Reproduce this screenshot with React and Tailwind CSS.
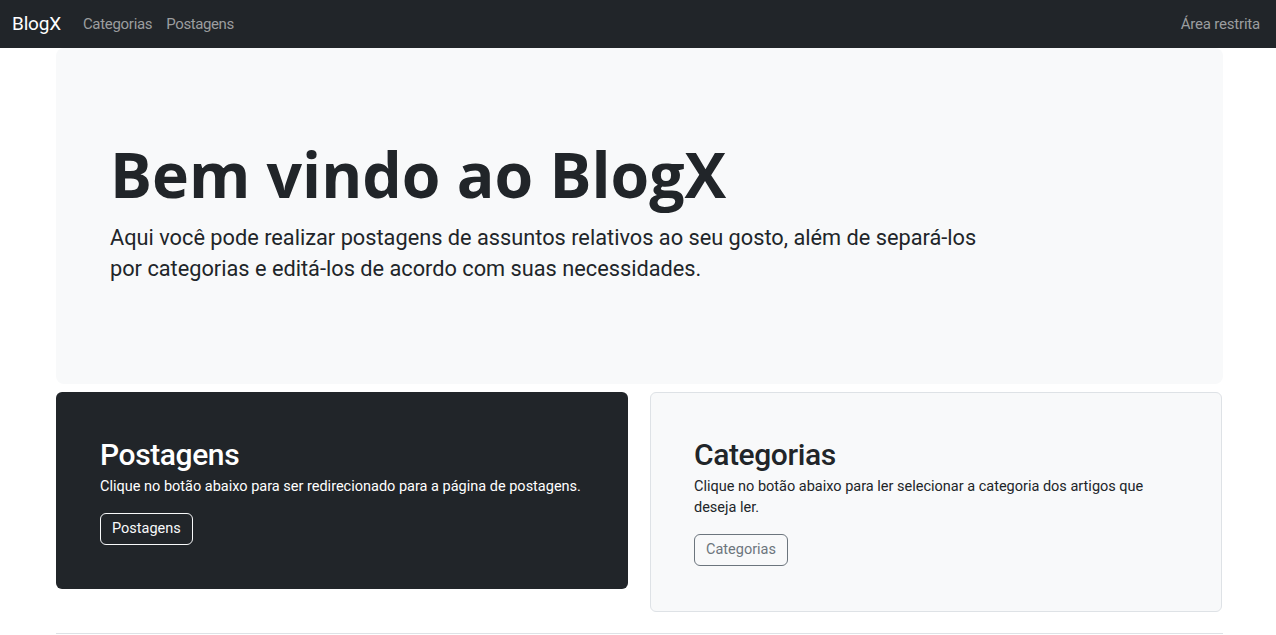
import React from "react";

export default function App() {
  return (
    <div className="bg-white text-[#212529]" style={{ fontFamily: "Roboto, 'Noto Sans', sans-serif" }}>
      <nav className="h-12 bg-[#212529] flex items-center pl-3 pr-4">
        <a className="text-white text-[19px] leading-[30px] tracking-[-0.2px] mr-[14px]">BlogX</a>
        <a className="text-[#9b9d9f] text-[15px] tracking-[-0.3px] px-2">Categorias</a>
        <a className="text-[#9b9d9f] text-[15px] tracking-[-0.4px] px-[6px]">Postagens</a>
        <a className="ml-auto text-[#9b9d9f] text-[15px] tracking-[-0.2px]">Área restrita</a>
      </nav>

      <main className="ml-[56px] w-[1167px]">
        <section className="h-[336px] bg-[#f8f9fa] rounded-lg pt-[89px] pl-[54px]">
          <h1
            className="text-[62.5px] leading-[74px] font-bold mb-[11px]"
            style={{ fontFamily: "'Open Sans', Roboto, sans-serif" }}
          >
            Bem vindo ao BlogX
          </h1>
          <p className="text-[21.75px] leading-[31px] w-[885px]">
            Aqui você pode realizar postagens de assuntos relativos ao seu gosto, além de separá-los por categorias e editá-los de acordo com suas necessidades.
          </p>
        </section>

        <div className="grid grid-cols-[572px_572px] items-start gap-[22px] mt-2">
          <div className="bg-[#212529] text-white rounded-md p-11">
            <h2 className="text-[30px] leading-[37px] font-medium tracking-[-0.4px] mb-[3px]">Postagens</h2>
            <p className="text-[14.5px] leading-[21px] mb-4 whitespace-nowrap">Clique no botão abaixo para ser redirecionado para a página de postagens.</p>
            <button className="h-8 px-[11px] border border-[#f8f9fa] rounded-md text-[14.5px] text-[#f8f9fa]">Postagens</button>
          </div>
          <div className="bg-[#f8f9fa] border border-[#dee2e6] rounded-md px-[43px] pt-[43px] pb-[45px]">
            <h2 className="text-[30px] leading-[37px] font-medium tracking-[-0.4px] mb-[3px]">Categorias</h2>
            <p className="text-[14.5px] leading-[21px] mb-4 w-[470px]">Clique no botão abaixo para ler selecionar a categoria dos artigos que deseja ler.</p>
            <button className="h-8 px-[11px] border border-[#6c757d] rounded-md text-[14.5px] text-[#6c757d]">Categorias</button>
          </div>
        </div>

        <footer className="mt-[21px] border-t border-[#dee2e6]"></footer>
      </main>
    </div>
  );
}
